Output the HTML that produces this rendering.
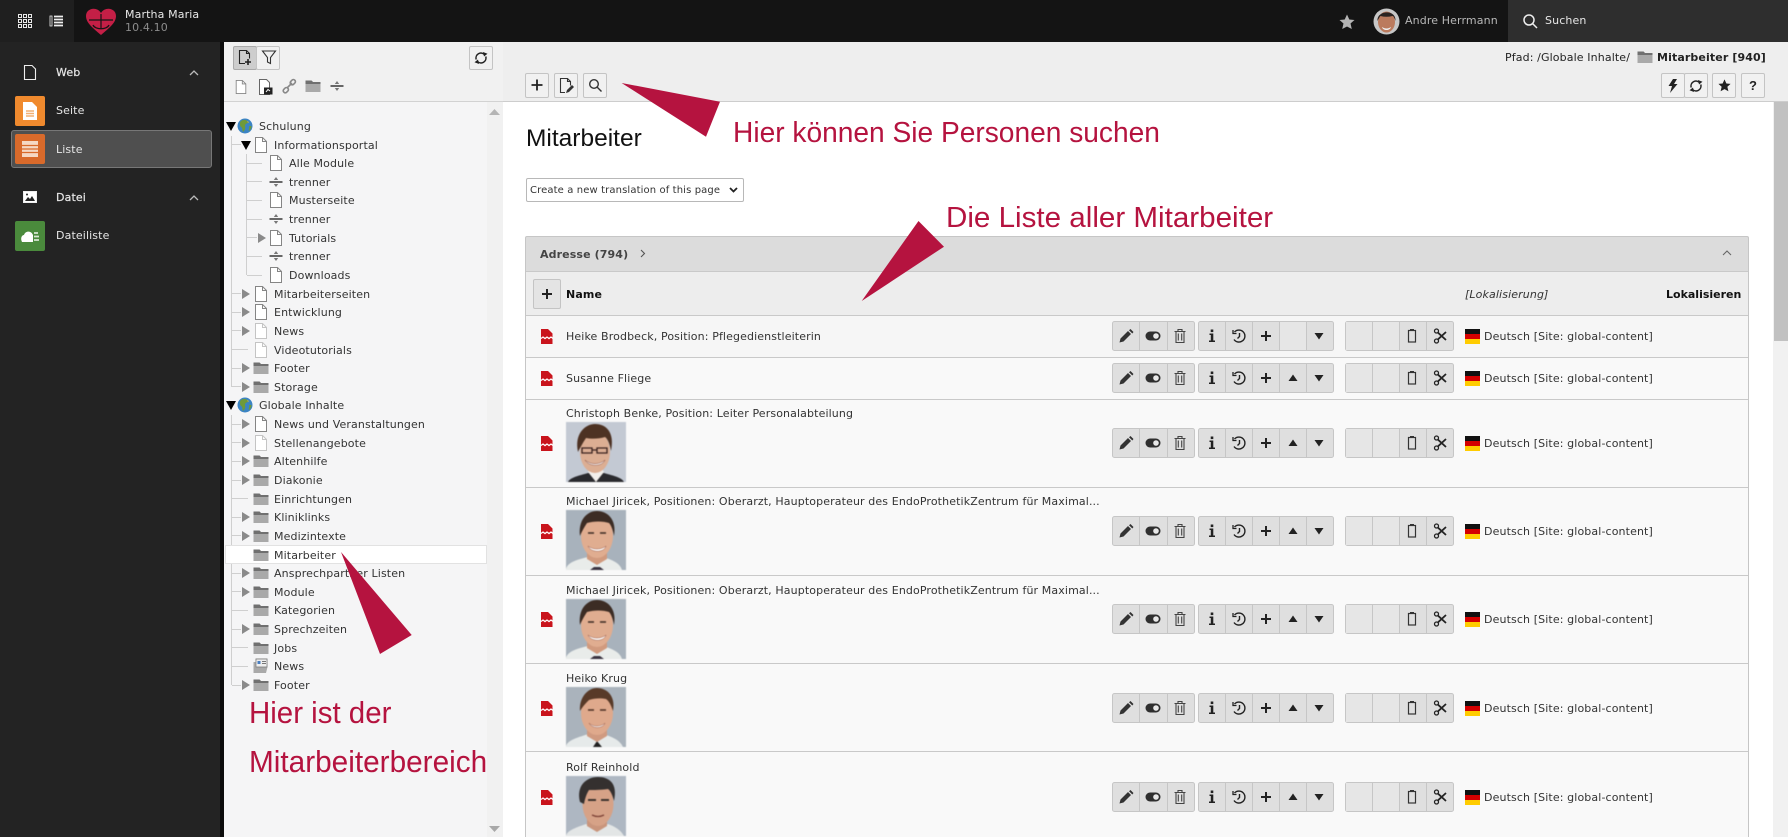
<!DOCTYPE html>
<html lang="de"><head><meta charset="utf-8"><title>Mitarbeiter</title>
<style>
html,body{margin:0;padding:0;width:1788px;height:837px;overflow:hidden;background:#fff}
body{position:relative;font:11px/16px "DejaVu Sans","Liberation Sans",sans-serif;color:#333;letter-spacing:.12px}
.a,.a *{box-sizing:border-box}
.a{position:absolute}
.tx{position:absolute;white-space:nowrap;height:16px;line-height:16px;margin-top:1px}
svg{position:absolute;overflow:visible}
.r{position:absolute;left:224px;width:263px;height:18px}
.r .tx{top:1px}.r svg.ic{top:1px;width:16px;height:16px}.r svg.ar{top:4px;width:10px;height:10px}
.l0 .tx{left:35px}.l0 .ic{left:13px}.l0 .ar{left:2px}
.l1 .tx{left:50px}.l1 .ic{left:29px}.l1 .ar{left:17px}
.l2 .tx{left:65px}.l2 .ic{left:44px}.l2 .ar{left:33px}
.btn{position:absolute;background:#f1f1f1;border:1px solid #c4c4c4;border-radius:2px;box-sizing:border-box}
.bd{box-sizing:border-box;border-bottom:1px solid #c9c9c9;background:#f9f9f9;position:absolute;left:526px;width:1222px}
.n{left:566px}
.fl{left:1465px;width:15px;height:15px;position:absolute;background:linear-gradient(#111 0 33%,#d40000 33% 66%,#fc0 66%)}
.red{left:541px;width:12px;height:15px}
.ph{left:566px;width:60px;height:60px;filter:blur(.45px)}
.ac{left:1112px;width:343px;height:30px}
.ann{position:absolute;color:#b5133f;font-family:"Liberation Sans",sans-serif;white-space:nowrap;transform-origin:0 50%;letter-spacing:0}
.side{color:#e6e6e6;-webkit-text-stroke:.2px #e6e6e6}
</style></head><body>
<svg width="0" height="0" style="position:absolute">
<defs>
<symbol id="d" viewBox="0 0 16 16"><path d="M2.500 .5h7l4 4v11h-11z" fill="#fff" stroke="#858585"/><path d="M9.500 .5v4h4" fill="none" stroke="#858585"/></symbol>
<symbol id="dl" viewBox="0 0 16 16"><path d="M2.500 .5h7l4 4v11h-11z" fill="#fff" stroke="#c4c4c4"/><path d="M9.500 .5v4h4" fill="none" stroke="#c4c4c4"/></symbol>
<symbol id="t" viewBox="0 0 16 16"><path d="M1.500 8h13" stroke="#444" stroke-width="1.600"/><path d="M8 3l2.200 3H5.800zM8 13L5.800 10h4.400z" fill="#777"/></symbol>
<symbol id="f" viewBox="0 0 16 16"><path d="M.5 2.500h6l1.500 1.500h7.500v10H.5z" fill="#a9a9a9"/><path d="M.5 2.500h6l1.500 1.500h7.500v2H.5z" fill="#707070"/></symbol>
<symbol id="g" viewBox="0 0 16 16"><circle cx="8" cy="8" r="7.500" fill="#3b84c4"/><path d="M4 3c3-2 6-1 7 1 0 2-3 1-3 4 1 3-1 5-2 6-1-2 0-4-2-5C3 8 2 5 4 3zM12 8l2.500 0c0 2-1 4-2.500 5-1-1 1-3 0-5z" fill="#6f9a3a"/><path d="M10 3l2 1-1 1z" fill="#d9b23c"/></symbol>
<symbol id="ra" viewBox="0 0 10 10"><path d="M1 0l8 5-8 5z" fill="#8a8a8a"/></symbol>
<symbol id="da" viewBox="0 0 10 10"><path d="M0 1h10L5 10z" fill="#000"/></symbol>
<symbol id="redi" viewBox="0 0 12 15"><path d="M0 0h7l4.500 4.500V15H0z" fill="#c9141c"/><path d="M0 9.500l2-1.500 2 1.500 2-1.500 2 1.500 2-1.500 2 1.500" fill="none" stroke="#fff" stroke-width="1.300"/></symbol>
<g id="reload"><path d="M-4.800 1.500A5 5 0 0 1 3.500-3.500" fill="none" stroke="#222" stroke-width="1.500"/><path d="M4.800-1.500A5 5 0 0 1-3.500 3.500" fill="none" stroke="#222" stroke-width="1.500"/><path d="M2-6l4.500 1.800L3-1.500zM-2 6l-4.500-1.800L-3 1.500z" fill="#222"/></g>
<symbol id="acts" viewBox="0 0 343 30">
<rect x=".5" y=".5" width="82" height="29" rx="2" fill="#dfdfdf" stroke="#c6c6c6"/>
<rect x="86.500" y=".5" width="135" height="29" rx="2" fill="#dfdfdf" stroke="#c6c6c6"/>
<rect x="233.500" y=".5" width="108" height="29" rx="2" fill="#dfdfdf" stroke="#c6c6c6"/>
<rect x="234" y="1" width="53" height="28" fill="#e6e6e6"/>
<path d="M27.500 1v28M55.500 1v28M113.500 1v28M140.500 1v28M167.500 1v28M194.500 1v28M260.500 1v28M287.500 1v28M314.500 1v28" stroke="#c6c6c6"/>
<g transform="translate(14 15)"><path d="M-6.500 6.500l1-4 7.500-7.500 3 3-7.500 7.500zM3-5.800l1.500-1.200 3 3-1.200 1.500z" fill="#333"/></g>
<g transform="translate(41 15)"><rect x="-7.500" y="-4.500" width="15" height="9" rx="4.500" fill="#2f2f2f"/><circle cx="3" r="2.800" fill="#e8e8e8"/></g>
<g transform="translate(68 15)" fill="none" stroke="#444"><path d="M-4 -4.500h8V6.500h-8zM-5.500-4.500h11M-2-4.500V-6.500h4v2M-1.700-2.500V4.500M1.700-2.500V4.500" stroke-width="1.100"/></g>
<g transform="translate(100 15)" fill="#222"><rect x="-1.300" y="-6.500" width="2.600" height="2.600"/><path d="M-2.500-2.500h3.800v7H3V6h-6V4.500h1.800V-1H-2.500z"/></g>
<g transform="translate(127 15)" fill="none" stroke="#222" stroke-width="1.400"><path d="M-4.500-4A6 6 0 1 1-5 3.500"/><path d="M.5-3V.5L-1.500 2.500"/><path d="M-6-6v3.500h3.500" stroke-width="1.300"/></g>
<path transform="translate(154 15)" d="M-5 0H5M0-5V5" stroke="#222" stroke-width="2"/>
<path transform="translate(207 15)" d="M-4.500-3h9L0 3.500z" fill="#222"/>
<g transform="translate(300 15)" fill="none" stroke="#333" stroke-width="1.200"><rect x="-3.500" y="-5.500" width="7" height="11.500"/><path d="M-2-6h4" stroke-width="2"/></g>
<g transform="translate(328 15)" fill="none" stroke="#222"><circle cx="-3.500" cy="-5" r="2" stroke-width="1.300"/><circle cx="-3.500" cy="5" r="2" stroke-width="1.300"/><path d="M-2-3.300L6 4M-2 3.300L6-4" stroke-width="1.800"/></g>
</symbol>
<symbol id="upa" viewBox="0 0 10 10"><path d="M5 1.500L9.500 8H.5z" fill="#222"/></symbol>

<symbol id="benke" viewBox="0 0 60 60"><rect width="60" height="60" fill="#c3c9d3"/><path d="M2 60c2-5 14-7 20-9h16c6 2 18 4 20 9z" fill="#2a2a2e"/><path d="M22 50l8 10 8-10-4-6h-8z" fill="#f2eeea"/><ellipse cx="29" cy="30" rx="15" ry="21" fill="#dcae93"/><path d="M12 30C8 12 19 2 29 2c11 0 20 8 16 27-1-6-3-12-6-14-6 2-14 2-19 1-2 3-5 8-8 14z" fill="#4d3223"/><path d="M16 26h10v5H16zM31 26h10v5H31zM26 28h5" fill="none" stroke="#3a2320" stroke-width="1.300"/><path d="M19 38c6 5 14 5 20 0-3 7-16 7-20 0z" fill="#fff" stroke="#8a4a3a" stroke-width=".5"/></symbol>
<symbol id="jir" viewBox="0 0 60 60"><rect width="60" height="60" fill="#a8b2bc"/><path d="M0 60c0-8 14-11 22-13l10 6 8-5c6 2 14 5 16 12z" fill="#e9ecea"/><path d="M24 60l4-3h6l4 3z" fill="#3a3340"/><path d="M21 42h20v7l-10 6-10-6z" fill="#d19a7e"/><ellipse cx="31" cy="26" rx="16" ry="22" fill="#e0ad90"/><path d="M14 26C12 10 21 1 31 1s20 8 17 25c-1-6-3-11-5-13-6-2-15-2-22 0-2 3-5 8-7 13z" fill="#3c2c24"/><path d="M22 36c5 4 13 4 18 0-2 7-15 7-18 0z" fill="#fff" stroke="#9a5a48" stroke-width=".5"/><path d="M22 23h6M34 23h6" stroke="#3b2a22" stroke-width="1.500"/></symbol>
<symbol id="krug" viewBox="0 0 60 60"><rect width="60" height="60" fill="#aab3bc"/><path d="M0 60c0-7 14-10 22-13l10 6 8-5c6 2 14 5 17 12z" fill="#e6eaea"/><path d="M27 60l4-6 5 6z" fill="#222"/><path d="M21 42h20v7l-10 6-10-6z" fill="#d09a80"/><ellipse cx="31" cy="26" rx="16" ry="22" fill="#dfa98c"/><path d="M14 24C13 10 22 1 31 1s19 7 16 23c-2-6-4-10-7-12-5-1-11-1-17 1-3 3-6 6-9 11z" fill="#583a28"/><path d="M23 36c4 4 12 4 16 0-2 6-13 6-16 0z" fill="#fff" stroke="#9a5a48" stroke-width=".5"/><path d="M22 23h6M34 23h6" stroke="#4a2f22" stroke-width="1.500"/></symbol>
<symbol id="rein" viewBox="0 0 60 60"><rect width="60" height="60" fill="#aeb7c2"/><path d="M0 60c1-6 12-9 20-12l12 6 10-6c6 2 13 6 16 12z" fill="#e3e6e6"/><path d="M21 42h20v8l-10 6-10-6z" fill="#c9957c"/><ellipse cx="32" cy="28" rx="15.500" ry="22" fill="#d6a287"/><path d="M14 26C10 10 20 1 32 1c11 0 20 6 16 24-1-4-3-10-6-12-8 1-14 1-19 1-2 3-4 8-5 14z" fill="#34302f"/><path d="M22 24h8M35 24h8" stroke="#2b2624" stroke-width="1.800"/><path d="M26 39c4 2 8 2 12 0" stroke="#7d4236" stroke-width="1.300" fill="none"/></symbol>
</defs></svg>

<!-- top bar -->
<div class="a" style="left:0;top:0;width:1788px;height:42px;background:#141414"></div>
<div class="a" style="left:0;top:0;width:74px;height:42px;background:#1f1f1f"></div>
<svg style="left:18px;top:14px" width="15" height="14" fill="none" stroke="#e8e8e8"><path d="M.5.500h3v3h-3zM5.500.500h3v3h-3zM10.500.500h3v3h-3zM.5 5.500h3v3h-3zM5.500 5.500h3v3h-3zM10.500 5.500h3v3h-3zM.5 10.500h3v3h-3zM5.500 10.500h3v3h-3zM10.500 10.500h3v3h-3z"/></svg>
<svg style="left:50px;top:15px" width="13" height="12"><path d="M0 1h2v10H0z" fill="none" stroke="#eee" stroke-width=".8"/><path d="M4 1.500h9M4 4.500h9M4 7.500h9M4 10.500h9" stroke="#eee" stroke-width="1.700"/></svg>
<svg style="left:85px;top:8px" width="32" height="28" viewBox="0 0 32 28"><path d="M16 27C8 20 1 15 1 8c0-8 11-10 15-3 4-7 15-5 15 3 0 7-7 12-15 19z" fill="#c41f46"/><path d="M16 6v15M4 12h24" stroke="#141414" stroke-width="1.200"/><path d="M8 17c2 5 14 5 16 0" fill="none" stroke="#141414" stroke-width="1.300"/></svg>
<div class="tx" style="left:125px;top:6px;color:#e8e8e8">Martha Maria</div>
<div class="tx" style="left:125px;top:19px;color:#8c8c8c">10.4.10</div>
<svg style="left:1339px;top:14px" width="16" height="16" viewBox="0 0 16 16"><path d="M8 .5l2.300 5 5.200.5-4 3.500 1.300 5.500L8 12.500 3.200 15l1.300-5.500-4-3.500 5.200-.5z" fill="#b4b4b4"/></svg>
<svg style="left:1373px;top:8px" width="27" height="27" viewBox="0 0 27 27"><circle cx="13.500" cy="13.500" r="13" fill="#c7c7c7"/><ellipse cx="13.500" cy="14" rx="8.500" ry="10.500" fill="#bb7b5e"/><path d="M4.500 13c-1-11 19-12 18 0-1-3-2-5-3-5-4 1-8 1-12 0-1 1-2 3-3 5z" fill="#2b2422"/><path d="M9 19c3 2 6 2 9 0-1 4-8 4-9 0z" fill="#eee"/></svg>
<div class="tx" style="left:1405px;top:12px;color:#b8b8b8">Andre Herrmann</div>
<div class="a" style="left:1508px;top:0;width:280px;height:42px;background:#2e2e2e"></div>
<svg style="left:1523px;top:14px" width="15" height="15" fill="none" stroke="#eee" stroke-width="1.500"><circle cx="6" cy="6" r="5"/><path d="M9.500 9.500l4.500 4.500"/></svg>
<div class="tx" style="left:1545px;top:12px;color:#e6e6e6">Suchen</div>

<!-- sidebar -->
<div class="a" style="left:0;top:42px;width:220px;height:795px;background:#232323"></div>
<div class="a" style="left:220px;top:42px;width:4px;height:795px;background:#0c0c0c"></div>
<svg style="left:24px;top:65px" width="12" height="15" fill="none" stroke="#eee" stroke-width="1.100"><path d="M.5.500h7.500l3.500 3.500v10.500H.5z"/></svg>
<div class="tx side" style="left:56px;top:64px">Web</div>
<svg style="left:189px;top:70px" width="10" height="6" fill="none" stroke="#bbb" stroke-width="1.300"><path d="M1 5l4-4 4 4"/></svg>
<div class="a" style="left:15px;top:96px;width:30px;height:30px;background:#f08a2e;border-radius:2px"></div>
<svg style="left:23px;top:102px" width="14" height="18"><path d="M0 0h9l5 5v13H0z" fill="#fff"/><path d="M3 9h8M3 11.500h8M3 14h8" stroke="#f2b074" stroke-width="1.500"/></svg>
<div class="tx" style="left:56px;top:102px;color:#e6e6e6">Seite</div>
<div class="a" style="left:11px;top:130px;width:201px;height:38px;background:#4f4f4f;border:1px solid #777;border-radius:3px"></div>
<div class="a" style="left:15px;top:134px;width:30px;height:30px;background:#d96a2b;border-radius:2px"></div>
<svg style="left:22px;top:141px" width="16" height="16"><path d="M0 0h16v16H0z" fill="#f5d8c4"/><path d="M0 4.500h16M0 8h16M0 11.500h16" stroke="#d96a2b" stroke-width="1.200"/></svg>
<div class="tx" style="left:56px;top:141px;color:#e6e6e6">Liste</div>
<svg style="left:23px;top:191px" width="14" height="12"><rect x=".5" y=".5" width="13" height="11" fill="#fff" stroke="#eee"/><path d="M2 10l3-4 2 2 2-3 3 5z" fill="#222"/><circle cx="4" cy="3.500" r="1" fill="#222"/></svg>
<div class="tx side" style="left:56px;top:189px">Datei</div>
<svg style="left:189px;top:195px" width="10" height="6" fill="none" stroke="#bbb" stroke-width="1.300"><path d="M1 5l4-4 4 4"/></svg>
<div class="a" style="left:15px;top:221px;width:30px;height:30px;background:#4a8a3c;border-radius:2px"></div>
<svg style="left:21px;top:230px" width="19" height="12"><path d="M1 12C-1 8 1 5 3 5c1-4 7-5 9 0v7z" fill="#fff"/><path d="M13 3h4M13 6.500h5M13 10h5" stroke="#d8e6d3" stroke-width="1.800"/></svg>
<div class="tx" style="left:56px;top:227px;color:#e6e6e6">Dateiliste</div>

<!-- tree panel -->
<div class="a" style="left:224px;top:42px;width:279px;height:60px;background:#f1f1f1;border-bottom:1px solid #d2d2d2"></div>
<div class="a" style="left:224px;top:102px;width:263px;height:735px;background:#f5f5f6"></div>
<div class="a" style="left:487px;top:102px;width:16px;height:735px;background:#f1f1f1"></div>
<svg style="left:489px;top:109px" width="11" height="6"><path d="M5.500 0L11 6H0z" fill="#b5b5b5"/></svg>
<svg style="left:489px;top:826px" width="11" height="6"><path d="M0 0h11L5.500 6z" fill="#a8a8a8"/></svg>

<div class="btn" style="left:233px;top:46px;width:24px;height:24px;background:#cdcdcd;border-color:#aaa"></div>
<div class="btn" style="left:256px;top:46px;width:24px;height:24px"></div>
<svg style="left:238px;top:50px" width="15" height="16" fill="none" stroke="#222" stroke-width="1.100"><path d="M7 13.500H1.500V.5h7l3 3v5"/><path d="M8.500 .5v3h3"/><path d="M10 9v6M7 12h6" stroke-width="1.600"/></svg>
<svg style="left:262px;top:50px" width="14" height="15" fill="none" stroke="#333" stroke-width="1.100"><path d="M.5 1h13L8.500 7.500v6l-3-1.500V7.500z"/></svg>
<div class="btn" style="left:469px;top:46px;width:24px;height:24px"></div>
<svg style="left:481px;top:58px" width="1" height="1"><use href="#reload"/></svg>
<svg style="left:234px;top:79px;width:14px;height:16px"><use href="#d" width="14" height="16"/></svg>
<svg style="left:259px;top:79px" width="14" height="16"><path d="M.5.500h7l3 3v12H.5z" fill="#fff" stroke="#666"/><path d="M5 8.500h8.500v7H5z" fill="#222"/><path d="M7 13l2-2.500 2 1.500" stroke="#fff" fill="none"/></svg>
<svg style="left:282px;top:79px" width="15" height="15" fill="none" stroke="#888" stroke-width="1.600"><path d="M5 9l5-5"/><rect x="8" y="1" width="5.500" height="4" rx="1.800" transform="rotate(-45 11 3)"/><rect x="1" y="9" width="5.500" height="4" rx="1.800" transform="rotate(-45 4 11)"/></svg>
<svg style="left:305px;top:78px;width:16px;height:16px"><use href="#f" width="16" height="16"/></svg>
<svg style="left:329px;top:78px;width:16px;height:16px"><use href="#t" width="16" height="16"/></svg>

<svg style="left:0;top:0" width="500" height="700" fill="none" stroke="#cfcfcf" stroke-width="1"><path d="M231.500 136V387M231.500 415V685M246.500 154V275M232 144.500h9M232 293.500h9M232 312.500h9M232 330.500h9M232 349.500h16M232 368.500h9M232 386.500h9M232 424.500h9M232 442.500h9M232 461.500h9M232 480.500h9M232 498.500h16M232 517.500h9M232 535.500h9M232 554.500h16M232 573.500h9M232 591.500h9M232 610.500h16M232 629.500h9M232 647.500h16M232 666.500h16M232 685.500h9M247 163.500h15M247 181.500h15M247 200.500h15M247 219.500h15M247 237.500h10M247 256.500h15M247 275.500h15"/></svg>

<div class="a" style="left:225px;top:545px;width:262px;height:19px;background:#fff;border:1px solid #e2e2e2"></div>

<div class="r l0" style="top:117px"><svg class="ar"><use href="#da" width="10" height="10"/></svg><svg class="ic"><use href="#g" width="16" height="16"/></svg><span class="tx">Schulung</span></div>
<div class="r l1" style="top:136px"><svg class="ar"><use href="#da" width="10" height="10"/></svg><svg class="ic"><use href="#d" width="16" height="16"/></svg><span class="tx">Informationsportal</span></div>
<div class="r l2" style="top:154px"><svg class="ic"><use href="#d" width="16" height="16"/></svg><span class="tx">Alle Module</span></div>
<div class="r l2" style="top:173px"><svg class="ic"><use href="#t" width="16" height="16"/></svg><span class="tx">trenner</span></div>
<div class="r l2" style="top:191px"><svg class="ic"><use href="#d" width="16" height="16"/></svg><span class="tx">Musterseite</span></div>
<div class="r l2" style="top:210px"><svg class="ic"><use href="#t" width="16" height="16"/></svg><span class="tx">trenner</span></div>
<div class="r l2" style="top:229px"><svg class="ar"><use href="#ra" width="10" height="10"/></svg><svg class="ic"><use href="#d" width="16" height="16"/></svg><span class="tx">Tutorials</span></div>
<div class="r l2" style="top:247px"><svg class="ic"><use href="#t" width="16" height="16"/></svg><span class="tx">trenner</span></div>
<div class="r l2" style="top:266px"><svg class="ic"><use href="#d" width="16" height="16"/></svg><span class="tx">Downloads</span></div>
<div class="r l1" style="top:285px"><svg class="ar"><use href="#ra" width="10" height="10"/></svg><svg class="ic"><use href="#d" width="16" height="16"/></svg><span class="tx">Mitarbeiterseiten</span></div>
<div class="r l1" style="top:303px"><svg class="ar"><use href="#ra" width="10" height="10"/></svg><svg class="ic"><use href="#d" width="16" height="16"/></svg><span class="tx">Entwicklung</span></div>
<div class="r l1" style="top:322px"><svg class="ar"><use href="#ra" width="10" height="10"/></svg><svg class="ic"><use href="#dl" width="16" height="16"/></svg><span class="tx">News</span></div>
<div class="r l1" style="top:341px"><svg class="ic"><use href="#dl" width="16" height="16"/></svg><span class="tx">Videotutorials</span></div>
<div class="r l1" style="top:359px"><svg class="ar"><use href="#ra" width="10" height="10"/></svg><svg class="ic"><use href="#f" width="16" height="16"/></svg><span class="tx">Footer</span></div>
<div class="r l1" style="top:378px"><svg class="ar"><use href="#ra" width="10" height="10"/></svg><svg class="ic"><use href="#f" width="16" height="16"/></svg><span class="tx">Storage</span></div>
<div class="r l0" style="top:396px"><svg class="ar"><use href="#da" width="10" height="10"/></svg><svg class="ic"><use href="#g" width="16" height="16"/></svg><span class="tx">Globale Inhalte</span></div>
<div class="r l1" style="top:415px"><svg class="ar"><use href="#ra" width="10" height="10"/></svg><svg class="ic"><use href="#d" width="16" height="16"/></svg><span class="tx">News und Veranstaltungen</span></div>
<div class="r l1" style="top:434px"><svg class="ar"><use href="#ra" width="10" height="10"/></svg><svg class="ic"><use href="#dl" width="16" height="16"/></svg><span class="tx">Stellenangebote</span></div>
<div class="r l1" style="top:452px"><svg class="ar"><use href="#ra" width="10" height="10"/></svg><svg class="ic"><use href="#f" width="16" height="16"/></svg><span class="tx">Altenhilfe</span></div>
<div class="r l1" style="top:471px"><svg class="ar"><use href="#ra" width="10" height="10"/></svg><svg class="ic"><use href="#f" width="16" height="16"/></svg><span class="tx">Diakonie</span></div>
<div class="r l1" style="top:490px"><svg class="ic"><use href="#f" width="16" height="16"/></svg><span class="tx">Einrichtungen</span></div>
<div class="r l1" style="top:508px"><svg class="ar"><use href="#ra" width="10" height="10"/></svg><svg class="ic"><use href="#f" width="16" height="16"/></svg><span class="tx">Kliniklinks</span></div>
<div class="r l1" style="top:527px"><svg class="ar"><use href="#ra" width="10" height="10"/></svg><svg class="ic"><use href="#f" width="16" height="16"/></svg><span class="tx">Medizintexte</span></div>
<div class="r l1" style="top:546px"><svg class="ic"><use href="#f" width="16" height="16"/></svg><span class="tx">Mitarbeiter</span></div>
<div class="r l1" style="top:564px"><svg class="ar"><use href="#ra" width="10" height="10"/></svg><svg class="ic"><use href="#f" width="16" height="16"/></svg><span class="tx">Ansprechpartner Listen</span></div>
<div class="r l1" style="top:583px"><svg class="ar"><use href="#ra" width="10" height="10"/></svg><svg class="ic"><use href="#f" width="16" height="16"/></svg><span class="tx">Module</span></div>
<div class="r l1" style="top:601px"><svg class="ic"><use href="#f" width="16" height="16"/></svg><span class="tx">Kategorien</span></div>
<div class="r l1" style="top:620px"><svg class="ar"><use href="#ra" width="10" height="10"/></svg><svg class="ic"><use href="#f" width="16" height="16"/></svg><span class="tx">Sprechzeiten</span></div>
<div class="r l1" style="top:639px"><svg class="ic"><use href="#f" width="16" height="16"/></svg><span class="tx">Jobs</span></div>
<div class="r l1" style="top:657px"><svg class="ic" viewBox="0 0 16 16"><path d="M.5 4h2V.5h12V9l-1.500 6H.5z" fill="#a9a9a9"/><path d="M3 1h11v8H3z" fill="#eee" stroke="#777" stroke-width=".7"/><path d="M4.500 3h3v3h-3z" fill="#4a7fc1"/><path d="M9 3.500h4M9 5.500h4" stroke="#777"/></svg><span class="tx">News</span></div>
<div class="r l1" style="top:676px"><svg class="ar"><use href="#ra" width="10" height="10"/></svg><svg class="ic"><use href="#f" width="16" height="16"/></svg><span class="tx">Footer</span></div>

<!-- doc header -->
<div class="a" style="left:503px;top:42px;width:1285px;height:60px;background:#eee;border-bottom:1px solid #cdcdcd"></div>
<div class="tx" style="left:1505px;top:49px;color:#222">Pfad: /Globale Inhalte/</div>
<svg style="left:1637px;top:49px;width:16px;height:16px"><use href="#f" width="16" height="16"/></svg>
<div class="tx" style="left:1657px;top:49px;color:#222;font-weight:bold">Mitarbeiter [940]</div>
<div class="btn" style="left:525px;top:73px;width:24px;height:25px"></div>
<svg style="left:537px;top:85px" width="1" height="1"><path d="M-5.500 0h11M0-5.500v11" stroke="#222" stroke-width="1.800"/></svg>
<div class="btn" style="left:554px;top:73px;width:24px;height:25px"></div>
<svg style="left:560px;top:78px" width="14" height="16" fill="none" stroke="#333" stroke-width="1.100"><path d="M5 14.500H.5V.5h7l3 3v4M7.500.5v3h3"/><path d="M6 15l1-3 5-5 2 2-5 5z" fill="#333" stroke="none"/></svg>
<div class="btn" style="left:583px;top:73px;width:24px;height:25px"></div>
<svg style="left:589px;top:79px" width="13" height="13" fill="none" stroke="#333" stroke-width="1.400"><circle cx="5" cy="5" r="4.300"/><path d="M8 8l4.500 4.500"/></svg>

<div class="btn" style="left:1661px;top:73px;width:24px;height:25px"></div>
<div class="btn" style="left:1684px;top:73px;width:24px;height:25px"></div>
<svg style="left:1668px;top:79px" width="10" height="14"><path d="M5 0h4L6 5h3.500L2 14l2-7H.5z" fill="#222"/></svg>
<svg style="left:1696px;top:86px" width="1" height="1"><use href="#reload"/></svg>
<div class="btn" style="left:1712px;top:73px;width:24px;height:25px"></div>
<svg style="left:1718px;top:79px" width="13" height="13" viewBox="0 0 16 16"><path d="M8 .5l2.300 5 5.200.5-4 3.500 1.300 5.500L8 12.500 3.200 15l1.300-5.500-4-3.500 5.200-.5z" fill="#222"/></svg>
<div class="btn" style="left:1741px;top:73px;width:24px;height:25px"></div>
<div class="tx" style="left:1749px;top:77px;color:#222;font-weight:bold;font-family:'Liberation Sans',sans-serif;font-size:13px">?</div>

<!-- scrollbar -->
<div class="a" style="left:1773px;top:102px;width:15px;height:735px;background:#f1f1f1"></div>
<div class="a" style="left:1774px;top:102px;width:14px;height:239px;background:#c1c1c1"></div>

<!-- content -->
<div class="tx" style="left:526px;top:124px;height:28px;line-height:28px;font:24.500px/28px 'Liberation Sans',sans-serif;color:#111;letter-spacing:0">Mitarbeiter</div>
<div class="a" style="left:526px;top:178px;width:218px;height:24px;background:#fff;border:1px solid #b8b8b8;border-radius:2px"></div>
<div class="tx" style="left:530px;top:182px;font-size:10px;color:#333">Create a new translation of this page</div>
<svg style="left:729px;top:187px" width="9" height="6" fill="none" stroke="#222" stroke-width="1.800"><path d="M1 1l3.500 3.500L8 1"/></svg>

<div class="a" style="left:526px;top:237px;width:1222px;height:35px;background:#dcdcdc;border-bottom:1px solid #c9c9c9"></div>
<div class="tx" style="left:540px;top:246px;font-weight:bold;color:#444">Adresse (794)</div>
<svg style="left:640px;top:249px" width="6" height="9" fill="none" stroke="#555" stroke-width="1.100"><path d="M1 1l3.500 3.500L1 8"/></svg>
<svg style="left:1722px;top:250px" width="10" height="6" fill="none" stroke="#666" stroke-width="1.100"><path d="M1 5l4-4 4 4"/></svg>
<div class="a" style="left:526px;top:272px;width:1222px;height:44px;background:#ededed;border-bottom:1px solid #c9c9c9"></div>
<div class="btn" style="left:533px;top:279px;width:28px;height:30px;background:#e4e4e4"></div>
<svg style="left:547px;top:294px" width="1" height="1"><path d="M-5 0H5M0-5V5" stroke="#222" stroke-width="2"/></svg>
<div class="tx" style="left:566px;top:286px;font-weight:bold;color:#111">Name</div>
<div class="tx" style="left:1465px;top:286px;font-style:italic;color:#333">[Lokalisierung]</div>
<div class="tx" style="left:1666px;top:286px;font-weight:bold;color:#111;letter-spacing:0">Lokalisieren</div>

<div class="bd" style="top:316px;height:42px;background:#f6f6f6"></div>
<div class="bd" style="top:358px;height:42px"></div>
<div class="bd" style="top:400px;height:88px"></div>
<div class="bd" style="top:488px;height:88px"></div>
<div class="bd" style="top:576px;height:88px"></div>
<div class="bd" style="top:664px;height:88px"></div>
<div class="bd" style="top:752px;height:85px;border-bottom:0"></div>
<div class="a" style="left:525px;top:236px;width:1224px;height:601px;border:1px solid #c6c6c6;border-bottom:0;border-radius:2px 2px 0 0"></div>

<div class="tx n" style="top:328px">Heike Brodbeck, Position: Pflegedienstleiterin</div>
<div class="tx n" style="top:370px">Susanne Fliege</div>
<div class="tx n" style="top:405px">Christoph Benke, Position: Leiter Personalabteilung</div>
<div class="tx n" style="top:493px">Michael Jiricek, Positionen: Oberarzt, Hauptoperateur des EndoProthetikZentrum für Maximal...</div>
<div class="tx n" style="top:582px">Michael Jiricek, Positionen: Oberarzt, Hauptoperateur des EndoProthetikZentrum für Maximal...</div>
<div class="tx n" style="top:670px">Heiko Krug</div>
<div class="tx n" style="top:759px">Rolf Reinhold</div>

<svg class="ph" style="top:422px"><use href="#benke" width="60" height="60"/></svg>
<svg class="ph" style="top:510px"><use href="#jir" width="60" height="60"/></svg>
<svg class="ph" style="top:599px"><use href="#jir" width="60" height="60"/></svg>
<svg class="ph" style="top:687px"><use href="#krug" width="60" height="60"/></svg>
<svg class="ph" style="top:776px"><use href="#rein" width="60" height="60"/></svg>

<svg class="red" style="top:329px"><use href="#redi" width="12" height="15"/></svg>
<svg class="red" style="top:371px"><use href="#redi" width="12" height="15"/></svg>
<svg class="red" style="top:436px"><use href="#redi" width="12" height="15"/></svg>
<svg class="red" style="top:524px"><use href="#redi" width="12" height="15"/></svg>
<svg class="red" style="top:612px"><use href="#redi" width="12" height="15"/></svg>
<svg class="red" style="top:701px"><use href="#redi" width="12" height="15"/></svg>
<svg class="red" style="top:790px"><use href="#redi" width="12" height="15"/></svg>

<svg class="ac" style="top:321px"><use href="#acts" width="343" height="30"/><rect x="168" y="1" width="26" height="28" fill="#e6e6e6"/></svg>
<svg class="ac" style="top:363px"><use href="#acts" width="343" height="30"/><use href="#upa" x="176" y="10" width="10" height="10"/></svg>
<svg class="ac" style="top:428px"><use href="#acts" width="343" height="30"/><use href="#upa" x="176" y="10" width="10" height="10"/></svg>
<svg class="ac" style="top:516px"><use href="#acts" width="343" height="30"/><use href="#upa" x="176" y="10" width="10" height="10"/></svg>
<svg class="ac" style="top:604px"><use href="#acts" width="343" height="30"/><use href="#upa" x="176" y="10" width="10" height="10"/></svg>
<svg class="ac" style="top:693px"><use href="#acts" width="343" height="30"/><use href="#upa" x="176" y="10" width="10" height="10"/></svg>
<svg class="ac" style="top:782px"><use href="#acts" width="343" height="30"/><use href="#upa" x="176" y="10" width="10" height="10"/></svg>

<div class="fl" style="top:329px"></div><div class="tx" style="left:1484px;top:328px">Deutsch [Site: global-content]</div>
<div class="fl" style="top:371px"></div><div class="tx" style="left:1484px;top:370px">Deutsch [Site: global-content]</div>
<div class="fl" style="top:436px"></div><div class="tx" style="left:1484px;top:435px">Deutsch [Site: global-content]</div>
<div class="fl" style="top:524px"></div><div class="tx" style="left:1484px;top:523px">Deutsch [Site: global-content]</div>
<div class="fl" style="top:612px"></div><div class="tx" style="left:1484px;top:611px">Deutsch [Site: global-content]</div>
<div class="fl" style="top:701px"></div><div class="tx" style="left:1484px;top:700px">Deutsch [Site: global-content]</div>
<div class="fl" style="top:790px"></div><div class="tx" style="left:1484px;top:789px">Deutsch [Site: global-content]</div>

<!-- annotations -->
<svg style="left:0;top:0" width="1788" height="837"><path d="M621.600 83L720 101.700 706 136.700zM918.500 221L944 246.700 861.700 301zM341 552L411.700 635 380 654z" fill="#b5133f"/></svg>
<div class="ann" style="left:733px;top:115px;font-size:29px;line-height:36px;transform:scaleX(.97)">Hier können Sie Personen suchen</div>
<div class="ann" style="left:946px;top:200px;font-size:29px;line-height:36px;transform:scaleX(1.02)">Die Liste aller Mitarbeiter</div>
<div class="ann" style="left:249px;top:694px;font-size:31px;line-height:38px;transform:scaleX(.95)">Hier ist der</div>
<div class="ann" style="left:249px;top:743px;font-size:31px;line-height:38px;transform:scaleX(.96)">Mitarbeiterbereich</div>
</body></html>
